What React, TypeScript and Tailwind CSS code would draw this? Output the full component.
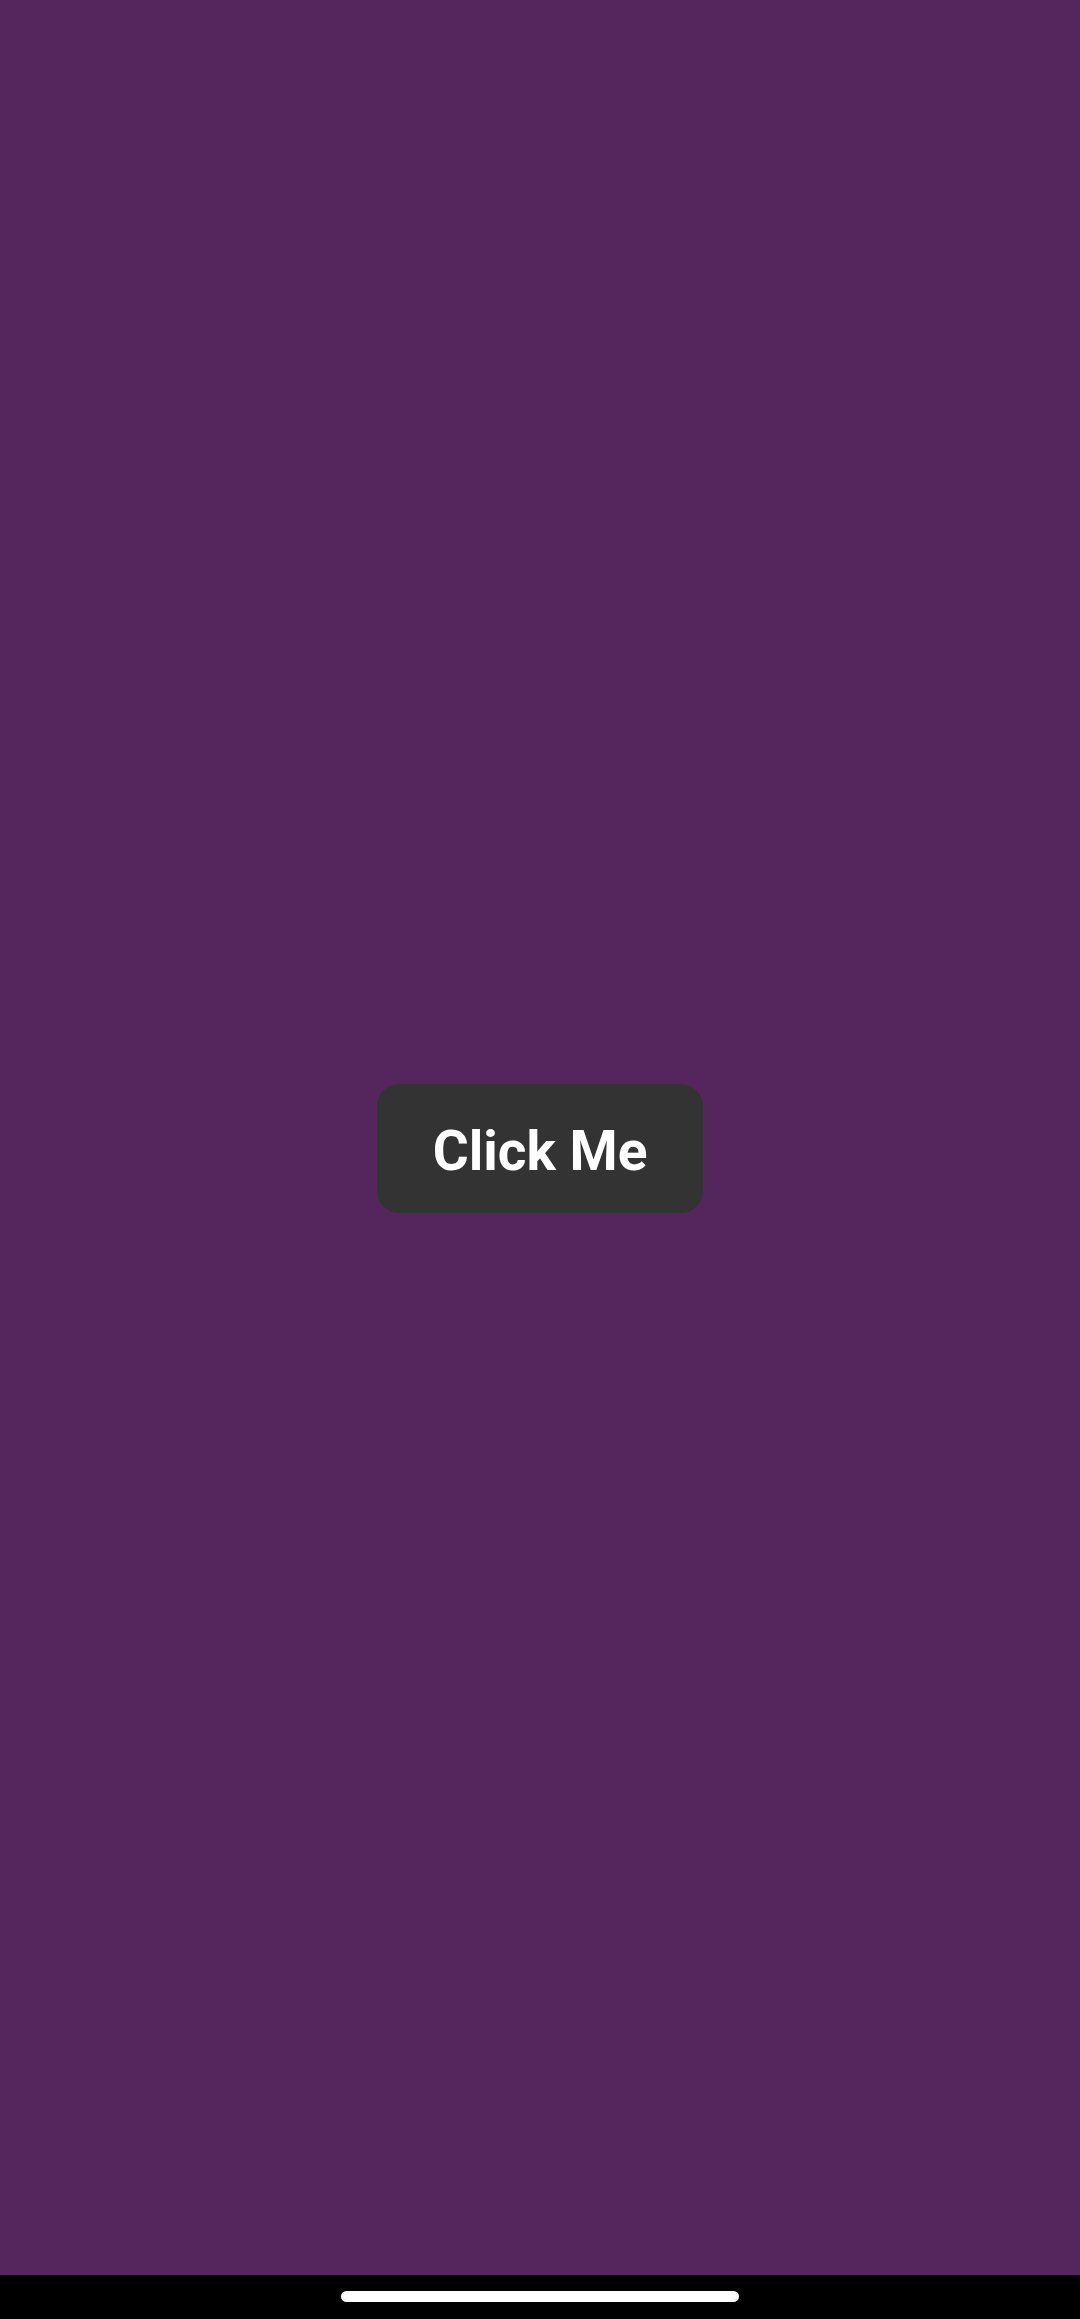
export default function App() {
  return (
    <div className="flex h-[2319px] w-[1080px] flex-col bg-black" style={{ fontFamily: "Roboto, 'Liberation Sans', sans-serif" }}>
      <main className="flex h-[2275px] items-center justify-center bg-[#55265e] pt-[22px]">
        <button className="flex h-[129px] w-[326px] items-center justify-center rounded-[22px] bg-[#333333] pt-[5px] text-[55px] font-bold leading-none text-white">
          Click Me
        </button>
      </main>
      <div className="flex h-[44px] items-start justify-center pt-[16px]">
        <div className="h-[11px] w-[398px] rounded-full bg-white" />
      </div>
    </div>
  );
}
